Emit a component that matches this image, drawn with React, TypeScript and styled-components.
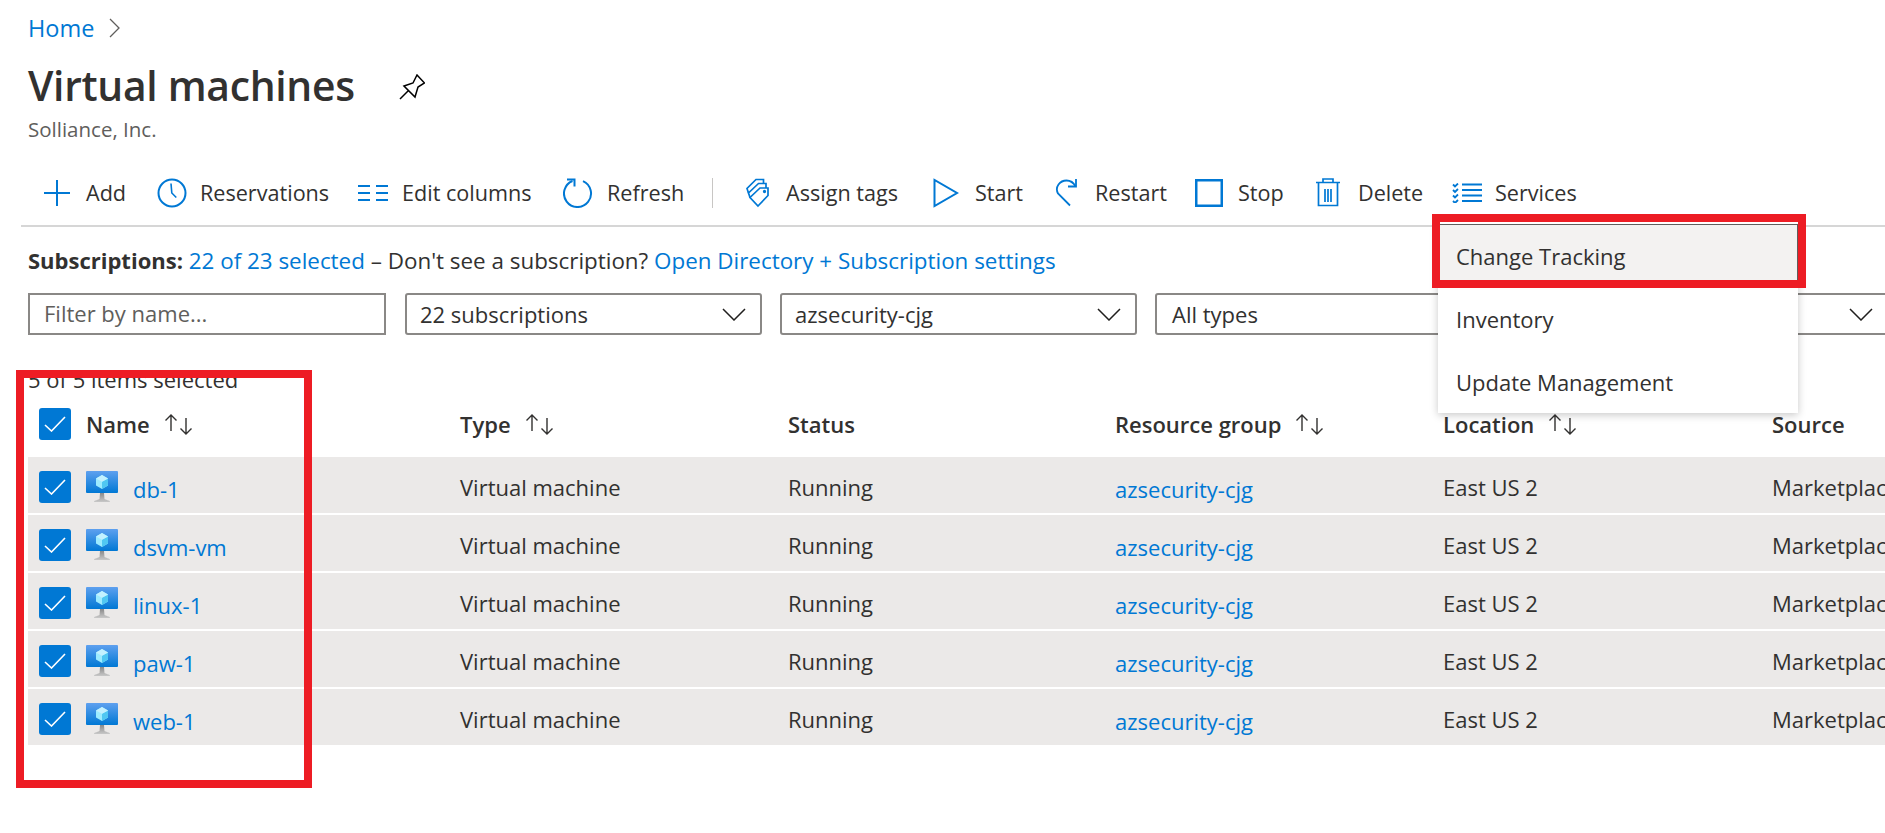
import React from "react";
import styled, { createGlobalStyle } from "styled-components";

const blue = "#0078d4";
const ink = "#323130";
const red = "#ed1c24";

const GlobalStyle = createGlobalStyle`
  html, body {
    margin: 0;
    padding: 0;
    background: #fff;
  }
  body {
    font-family: "Open Sans", "Liberation Sans", sans-serif;
    color: ${ink};
  }
`;

const Page = styled.div`
  position: relative;
  width: 1885px;
  height: 833px;
  overflow: hidden;
  background: #fff;
  font-size: 22px;
`;

const Crumbs = styled.nav`
  display: flex;
  align-items: center;
  gap: 14px;
  height: 32px;
  padding: 12px 0 0 28px;
  color: ${blue};
  font-size: 23.5px;
`;

const TitleRow = styled.div`
  display: flex;
  align-items: center;
  gap: 44px;
  height: 56px;
  margin: 15px 0 0 28px;
`;

const Title = styled.h1`
  margin: 0 0 4px;
  font-size: 40.8px;
  font-weight: 600;
  letter-spacing: -0.3px;
  color: ${ink};
`;

const Subtitle = styled.div`
  height: 26px;
  margin: 1px 0 0 28px;
  line-height: 26px;
  font-size: 20.5px;
  color: #605e5c;
`;

const Toolbar = styled.div`
  display: flex;
  align-items: center;
  height: 41px;
  margin: 30px 0 0 21px;
  padding: 0 0 12px 22px;
  border-bottom: 2px solid #d6d6d6;
  font-size: 21.6px;
`;

const ToolButton = styled.div<{ $w: number }>`
  display: flex;
  align-items: center;
  flex: 0 0 ${(p) => p.$w}px;
  white-space: nowrap;
`;

const ToolIcon = styled.span<{ $w: number }>`
  display: flex;
  align-items: center;
  flex: 0 0 ${(p) => p.$w}px;
`;

const Divider = styled.span`
  flex: 0 0 1px;
  height: 30px;
  margin-right: 33px;
  background: #c8c6c4;
`;

const SubsLine = styled.div`
  height: 30px;
  margin: 18px 0 0 28px;
  line-height: 30px;
  white-space: nowrap;
  font-size: 22.4px;
`;

const Strong = styled.span`
  font-size: 22px;
  font-weight: 700;
`;

const Link = styled.span`
  color: ${blue};
`;

const Filters = styled.div`
  display: flex;
  gap: 18px;
  margin: 18px 0 0 28px;
  width: 1900px;
`;

const FilterInput = styled.div`
  box-sizing: border-box;
  flex: 0 0 358px;
  height: 42px;
  margin-right: 1px;
  padding-left: 14px;
  border: 2px solid #8a8886;
  line-height: 37px;
  color: #605e5c;
`;

const Select = styled.div<{ $w: number }>`
  box-sizing: border-box;
  display: flex;
  align-items: center;
  justify-content: space-between;
  flex: 0 0 ${(p) => p.$w}px;
  height: 42px;
  padding: 0 14px 0 13px;
  border: 2px solid #8a8886;
  border-radius: 3px;
`;

const WideSelect = styled(Select)`
  padding: 0 40px 0 15px;
`;

const Count = styled.div`
  height: 28px;
  margin: 30px 0 0 28px;
  line-height: 28px;
`;

const Table = styled.div`
  margin: 3px 0 0 28px;
  width: 1857px;
`;

const cols = "432px 328px 327px 328px 329px 1fr";

const HeadRow = styled.div`
  box-sizing: border-box;
  display: grid;
  grid-template-columns: ${cols};
  align-items: center;
  height: 61px;
  padding-bottom: 5px;
  font-weight: 600;
`;

const HeadCell = styled.div<{ $first?: boolean }>`
  display: flex;
  align-items: center;
  gap: 14px;
  padding-left: ${(p) => (p.$first ? "11px" : "0")};
`;

const Row = styled.div`
  display: grid;
  grid-template-columns: ${cols};
  align-items: center;
  height: 56px;
  margin-bottom: 2px;
  background: #ebe9e8;
`;

const Cell = styled.div<{ $clip?: boolean }>`
  white-space: nowrap;
  overflow: ${(p) => (p.$clip ? "hidden" : "visible")};
  margin-top: 4px;
`;

const LinkCell = styled(Cell)`
  margin-top: 8px;
  color: ${blue};
`;

const NameCell = styled.div`
  display: flex;
  align-items: center;
  padding-left: 11px;
`;

const Check = styled.span`
  display: flex;
  align-items: center;
  justify-content: center;
  flex: 0 0 32px;
  height: 32px;
  margin: 4px 15px 0 0;
  border-radius: 3px;
  background: ${blue};
`;

const HeadCheck = styled(Check)`
  margin: 0 1px 0 0;
`;

const VmSvg = styled.svg`
  margin-top: 4px;
`;

const VmName = styled.span`
  margin: 8px 0 0 15px;
  color: ${blue};
`;

const Menu = styled.div`
  position: absolute;
  left: 1438px;
  top: 222px;
  width: 360px;
  height: 191px;
  padding-top: 2px;
  box-sizing: border-box;
  background: #fff;
  box-shadow: 0 2px 8px rgba(0, 0, 0, 0.22);
`;

const MenuItem = styled.div<{ $active?: boolean }>`
  box-sizing: border-box;
  display: flex;
  align-items: center;
  height: 63px;
  padding-left: ${(p) => (p.$active ? "17px" : "18px")};
  background: ${(p) => (p.$active ? "#f3f2f1" : "#fff")};
  border: ${(p) => (p.$active ? "1px solid #605e5c" : "none")};
`;

const Callout = styled.div<{ $x: number; $y: number; $w: number; $h: number }>`
  position: absolute;
  box-sizing: border-box;
  left: ${(p) => p.$x}px;
  top: ${(p) => p.$y}px;
  width: ${(p) => p.$w}px;
  height: ${(p) => p.$h}px;
  border: 8px solid ${red};
  pointer-events: none;
`;

const Sort = () => (
  <svg width="30" height="22" viewBox="0 0 30 22" fill="none" stroke="#323130" strokeWidth="1.4">
    <path d="M7 18V2M1.5 7.5L7 2l5.5 5.5M22 5v16M16.5 15.5L22 21l5.5-5.5" />
  </svg>
);

const Chevron = () => (
  <svg width="24" height="13" viewBox="0 0 24 13" fill="none" stroke="#201f1e" strokeWidth="1.5">
    <path d="M1 1l11 11L23 1" />
  </svg>
);

const CheckMark = () => (
  <svg width="22" height="16" viewBox="0 0 22 16" fill="none" stroke="#fff" strokeWidth="1.6">
    <path d="M1 9l6.5 6L21 1" />
  </svg>
);

const VmIcon = () => (
  <VmSvg width="32" height="32" viewBox="0 0 32 32">
    <defs>
      <linearGradient id="screen" x1="0" y1="0" x2="0" y2="1">
        <stop offset="0" stopColor="#5ea0ef" />
        <stop offset="1" stopColor="#0078d4" />
      </linearGradient>
      <linearGradient id="stand" x1="0" y1="0" x2="0" y2="1">
        <stop offset="0" stopColor="#8a8a8a" />
        <stop offset="1" stopColor="#c8c8c8" />
      </linearGradient>
    </defs>
    <rect x="0" y="0" width="32" height="22" rx="1" fill="url(#screen)" />
    <path d="M8 31c0-2 5-2 5.500-3l.5-6h4l.5 6c.5 1 5.500 1 5.500 3z" fill="url(#stand)" />
    <path d="M16 4l6 3.400v7L16 18l-6-3.600v-7z" fill="#9cebff" />
    <path d="M16 10.800V18l6-3.600v-7z" fill="#50c7f2" />
    <path d="M16 4l6 3.400-6 3.400-6-3.400z" fill="#c3f1ff" />
  </VmSvg>
);

const PlusIcon = () => (
  <svg width="28" height="28" viewBox="0 0 28 28" fill="none" stroke={blue} strokeWidth="2">
    <path d="M14 1v26M1 14h26" />
  </svg>
);

const ClockIcon = () => (
  <svg width="30" height="30" viewBox="0 0 30 30" fill="none" stroke={blue} strokeWidth="2">
    <circle cx="15" cy="15" r="13.500" />
    <path d="M14 5.500l.8 9.500 4.500 4.500" strokeWidth="1.6" />
  </svg>
);

const ColumnsIcon = () => (
  <svg width="30" height="18" viewBox="0 0 30 18" fill="none" stroke={blue} strokeWidth="2">
    <path d="M0 2h12M18 2h12M0 9h12M18 9h12M0 16h12M18 16h12" />
  </svg>
);

const RefreshIcon = () => (
  <svg width="30" height="30" viewBox="0 0 30 30" fill="none" stroke={blue} strokeWidth="2">
    <path d="M20 3.200A13.500 13.500 0 1 1 9.500 3" />
    <path d="M4 1.500h7.500v7" />
  </svg>
);

const TagsIcon = () => (
  <svg width="24" height="30" viewBox="0 0 24 30" fill="none" stroke={blue} strokeWidth="1.7">
    <path d="M12 28L22 17.500V10h-8L4 19.500z" />
    <path d="M4 19.500L2.500 15l10-9.500H20V10" />
    <path d="M2.500 15L1 10.500 10 1.500h7.500v4" />
    <circle cx="18.500" cy="13.500" r=".8" />
  </svg>
);

const PlayIcon = () => (
  <svg width="26" height="30" viewBox="0 0 26 30" fill="none" stroke={blue} strokeWidth="2">
    <path d="M1.500 2v26L24 15z" />
  </svg>
);

const RestartIcon = () => (
  <svg width="24" height="30" viewBox="0 0 24 30" fill="none" stroke={blue} strokeWidth="1.8">
    <path d="M15 27.500L3 15.500C-.5 9 5 2.500 11.500 2.500c4 0 7 2 9 6" />
    <path d="M13 8.500h8V1" />
  </svg>
);

const StopIcon = () => (
  <svg width="28" height="28" viewBox="0 0 28 28" fill="none" stroke={blue} strokeWidth="2.500">
    <rect x="1.250" y="1.250" width="25.500" height="25.500" />
  </svg>
);

const TrashIcon = () => (
  <svg width="24" height="30" viewBox="0 0 24 30" fill="none" stroke={blue} strokeWidth="1.7">
    <path d="M0 4.500h24M2.500 4.500V27.500h19V4.500M7 4.500V1h10v3.500M9 11v13M12 11v13M15 11v13" />
  </svg>
);

const ServicesIcon = () => (
  <svg width="30" height="20" viewBox="0 0 30 20" fill="none" stroke={blue} strokeWidth="1.800">
    <path d="M10 1.500h20M10 7h20M10 12.500h20M10 18h20M1 1.500l2 2 3-3M1 7l2 2 3-3M1 12.500l2 2 3-3M1 18l2 2 3-3" />
  </svg>
);

const PinIcon = () => (
  <svg width="26" height="26" viewBox="0 0 26 26" fill="none" stroke="#000" strokeWidth="1.500">
    <path d="M1 25l8-8M5 12l9-3 4-8 7.500 8-6.500 4-3 10z" />
  </svg>
);

const tools = [
  { label: "Add", w: 114, iw: 43, icon: <PlusIcon /> },
  { label: "Reservations", w: 201, iw: 43, icon: <ClockIcon /> },
  { label: "Edit columns", w: 205, iw: 44, icon: <ColumnsIcon /> },
  { label: "Refresh", w: 149, iw: 44, icon: <RefreshIcon /> },
];

const tools2 = [
  { label: "Assign tags", w: 187, iw: 40, icon: <TagsIcon /> },
  { label: "Start", w: 122, iw: 42, icon: <PlayIcon /> },
  { label: "Restart", w: 140, iw: 40, icon: <RestartIcon /> },
  { label: "Stop", w: 121, iw: 43, icon: <StopIcon /> },
  { label: "Delete", w: 136, iw: 42, icon: <TrashIcon /> },
  { label: "Services", w: 130, iw: 43, icon: <ServicesIcon /> },
];

const vms = ["db-1", "dsvm-vm", "linux-1", "paw-1", "web-1"];

export default function App() {
  return (
    <Page>
      <GlobalStyle />
      <Crumbs>
        <span>Home</span>
        <svg width="13" height="20" viewBox="0 0 13 20" fill="none" stroke="#605e5c" strokeWidth="1.300">
          <path d="M2 1l9 9-9 9" />
        </svg>
      </Crumbs>
      <TitleRow>
        <Title>Virtual machines</Title>
        <PinIcon />
      </TitleRow>
      <Subtitle>Solliance, Inc.</Subtitle>

      <Toolbar>
        {tools.map((t) => (
          <ToolButton key={t.label} $w={t.w}>
            <ToolIcon $w={t.iw}>{t.icon}</ToolIcon>
            {t.label}
          </ToolButton>
        ))}
        <Divider />
        {tools2.map((t) => (
          <ToolButton key={t.label} $w={t.w}>
            <ToolIcon $w={t.iw}>{t.icon}</ToolIcon>
            {t.label}
          </ToolButton>
        ))}
      </Toolbar>

      <SubsLine>
        <Strong>Subscriptions:</Strong> <Link>22 of 23 selected</Link> – Don't see a subscription?{" "}
        <Link>Open Directory + Subscription settings</Link>
      </SubsLine>

      <Filters>
        <FilterInput>Filter by name...</FilterInput>
        <Select $w={357}>
          22 subscriptions
          <Chevron />
        </Select>
        <Select $w={357}>
          azsecurity-cjg
          <Chevron />
        </Select>
        <WideSelect $w={760}>
          All types
          <Chevron />
        </WideSelect>
      </Filters>

      <Count>5 of 5 items selected</Count>

      <Table>
        <HeadRow>
          <HeadCell $first>
            <HeadCheck>
              <CheckMark />
            </HeadCheck>
            <span>Name</span>
            <Sort />
          </HeadCell>
          <HeadCell>
            <span>Type</span>
            <Sort />
          </HeadCell>
          <HeadCell>
            <span>Status</span>
          </HeadCell>
          <HeadCell>
            <span>Resource group</span>
            <Sort />
          </HeadCell>
          <HeadCell>
            <span>Location</span>
            <Sort />
          </HeadCell>
          <HeadCell>
            <span>Source</span>
          </HeadCell>
        </HeadRow>
        {vms.map((vm) => (
          <Row key={vm}>
            <NameCell>
              <Check>
                <CheckMark />
              </Check>
              <VmIcon />
              <VmName>{vm}</VmName>
            </NameCell>
            <Cell>Virtual machine</Cell>
            <Cell>Running</Cell>
            <LinkCell>azsecurity-cjg</LinkCell>
            <Cell>East US 2</Cell>
            <Cell $clip>Marketplace</Cell>
          </Row>
        ))}
      </Table>

      <Menu>
        <MenuItem $active>Change Tracking</MenuItem>
        <MenuItem>Inventory</MenuItem>
        <MenuItem>Update Management</MenuItem>
      </Menu>

      <Callout $x={16} $y={370} $w={296} $h={418} />
      <Callout $x={1432} $y={214} $w={374} $h={74} />
    </Page>
  );
}
